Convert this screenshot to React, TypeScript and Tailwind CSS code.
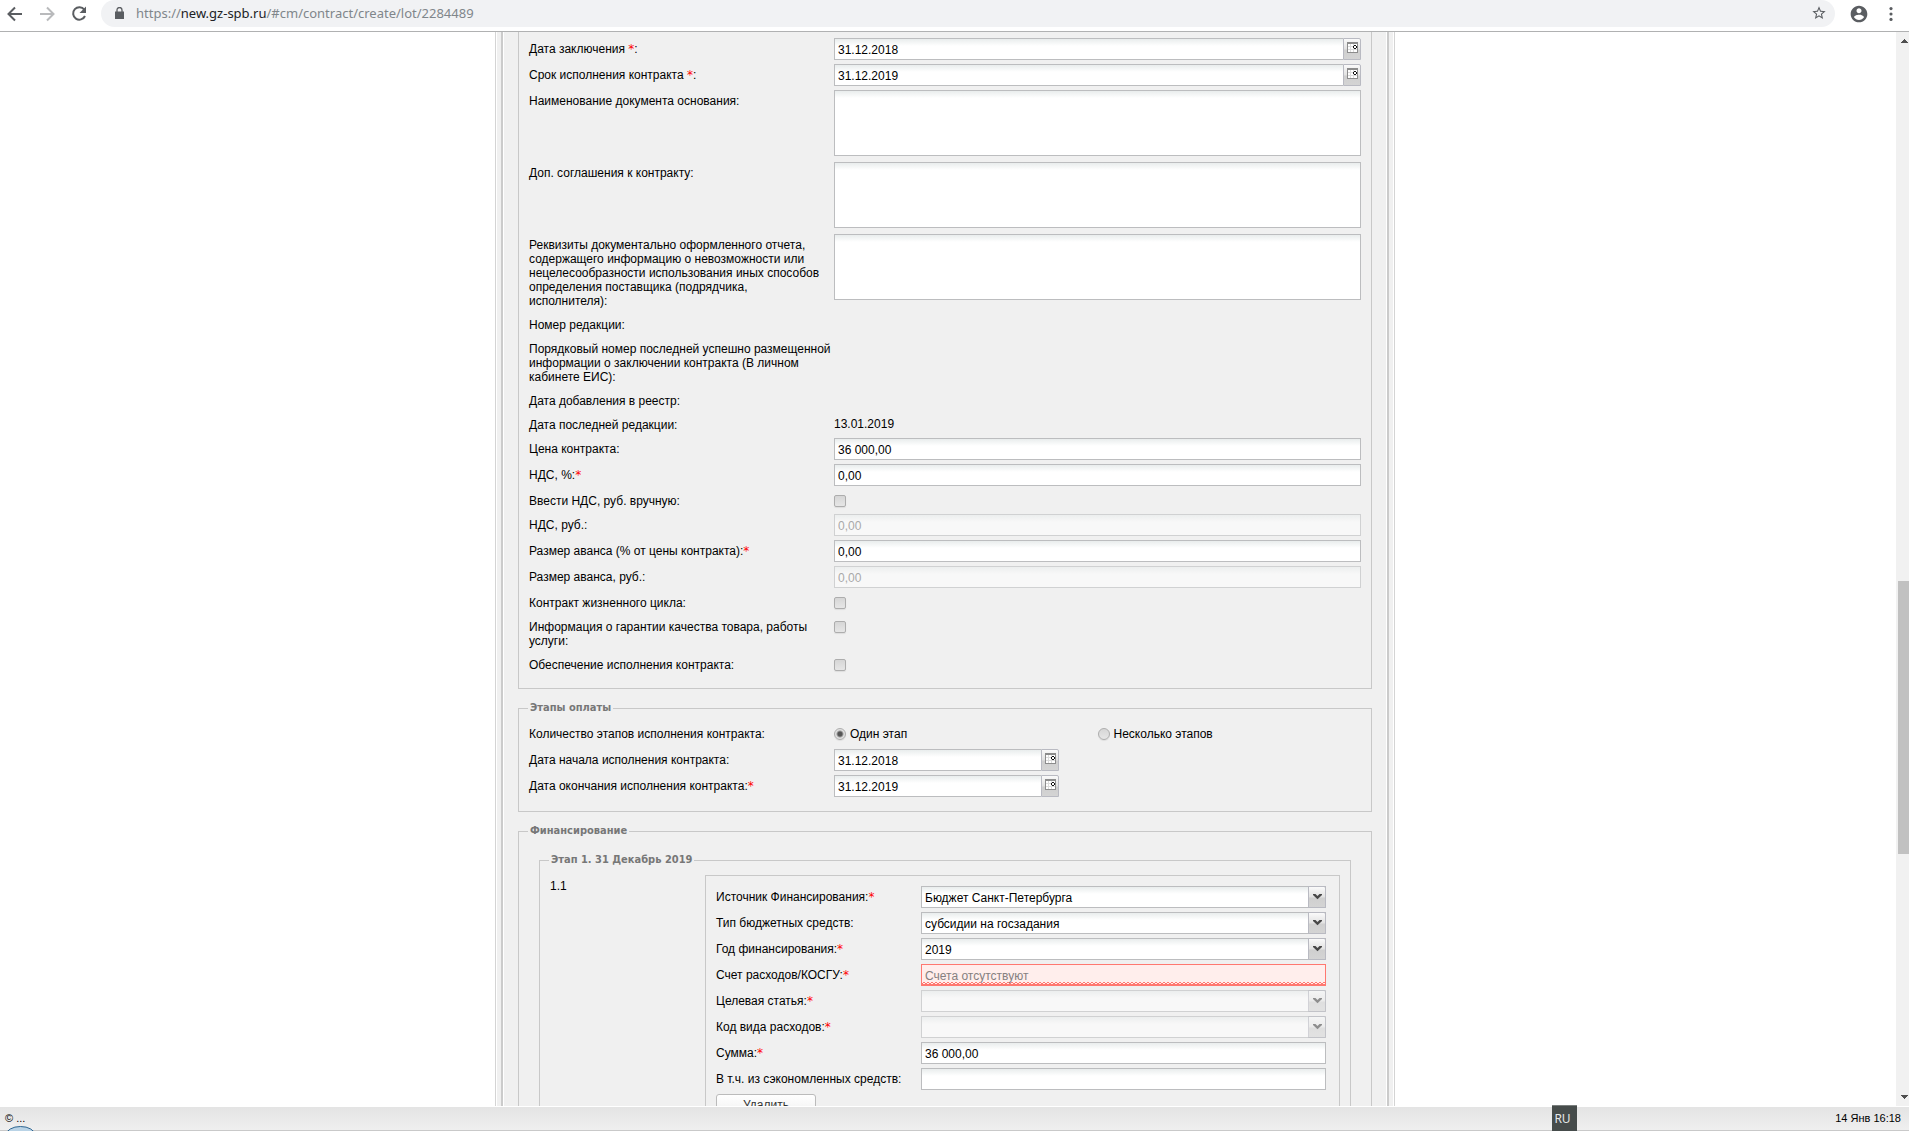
import { useId, type ReactNode } from "react";

const fieldBox =
  "block w-full rounded-none border border-[#bcbdbf] bg-white bg-[linear-gradient(#e9eded,#fff_7px)] px-[3px] pt-0.5 text-xs text-black outline-none disabled:border-[#d0d1d2] disabled:bg-[#f8f8f8] disabled:bg-[linear-gradient(#eceeee,#f8f8f8_7px)] disabled:text-[#a9a9a9] disabled:opacity-100";

const toggleBox =
  "block size-3 shrink-0 appearance-none border border-[#adadad] bg-[linear-gradient(#d6d6d6,#e6e6e6)] shadow-[0_1px_1px_rgba(0,0,0,0.08)]";

function Star() {
  return <span className="font-['DejaVu_Sans',sans-serif] text-xs leading-3 text-[#f00]">*</span>;
}

type RowProps = {
  label: string;
  id?: string;
  star?: "after" | "inside";
  narrow?: boolean;
  children?: ReactNode;
};

function Row({ label, id, star, narrow, children }: RowProps) {
  const column = narrow
    ? "w-[205px] shrink-0 pt-1 pb-0.5 leading-[14px]"
    : "w-[305px] shrink-0 pt-1 pb-0.5 leading-[14px] whitespace-pre-line";
  const content = (
    <>
      {label}
      {star === "inside" && (
        <>
          {" "}
          <Star />
        </>
      )}
      {star === "inside" && ":"}
      {star === "after" && <Star />}
    </>
  );
  return (
    <div className="mb-1 flex items-start">
      {id ? (
        <label htmlFor={id} className={column}>
          {content}
        </label>
      ) : (
        <span className={column}>{content}</span>
      )}
      <div className="min-w-0 flex-1">{children}</div>
    </div>
  );
}

type FieldProps = {
  label: string;
  value?: string;
  star?: "after" | "inside";
  narrow?: boolean;
  disabled?: boolean;
};

function TextRow({ label, value = "", star, narrow, disabled }: FieldProps) {
  const id = useId();
  return (
    <Row label={label} id={id} star={star} narrow={narrow}>
      <input id={id} type="text" defaultValue={value} disabled={disabled} className={`${fieldBox} h-[22px]`} />
    </Row>
  );
}

function AreaRow({ label }: { label: string }) {
  const id = useId();
  return (
    <Row label={label} id={id}>
      <textarea id={id} className={`${fieldBox} mb-0.5 h-[66px] resize-none`} />
    </Row>
  );
}

function CheckRow({ label }: { label: string }) {
  const id = useId();
  return (
    <Row label={label} id={id}>
      <input id={id} type="checkbox" className={`${toggleBox} mt-[5px] rounded-xs`} />
    </Row>
  );
}

function CalendarIcon() {
  return (
    <svg width="11" height="13" viewBox="0 0 11 13" shapeRendering="crispEdges" aria-hidden="true">
      <path d="M0 1h11v11H0z" fill="#8c8c8c" />
      <path d="M1 3h9v8H1z" fill="#fff" />
      <path d="M3 3h1v8H3zM6 3h1v8H6zM1 5h6v1H1zM1 8h9v1H1z" fill="#dcdcdc" />
      <path d="M7 4h2v1H7zM6 5h1v2H6zM9 5h1v2H9zM7 7h2v1H7z" fill="#111" />
      <path d="M7 5h2v2H7z" fill="#fff" />
    </svg>
  );
}

function DateRow({ label, value, star, short }: FieldProps & { short?: boolean }) {
  const id = useId();
  return (
    <Row label={label} id={id} star={star}>
      <div className={short ? "flex w-[225px]" : "flex w-full"}>
        <input id={id} type="text" defaultValue={value} className={`${fieldBox} h-[22px] min-w-0 flex-1 border-r-0`} />
        <button
          type="button"
          aria-label="Выбрать дату"
          className="flex h-[22px] w-[18px] justify-center rounded-tr-xs border border-[#b9bac2] bg-[linear-gradient(#fafafa,#e2e2e2_50%,#cfcfcf_55%,#d4d4d4)] pt-0.5"
        >
          <CalendarIcon />
        </button>
      </div>
    </Row>
  );
}

function SelectRow({ label, value = "", star, disabled }: FieldProps) {
  const id = useId();
  return (
    <Row label={label} id={id} star={star} narrow>
      <div className="relative">
        <select id={id} disabled={disabled} className={`${fieldBox} h-[22px] appearance-none`}>
          <option>{value}</option>
        </select>
        <span
          className={
            disabled
              ? "pointer-events-none absolute inset-y-0 right-0 flex w-[18px] justify-center rounded-tr-xs border border-[#b9bac2] bg-[linear-gradient(#fafafa,#e2e2e2_50%,#cfcfcf_55%,#d4d4d4)] pt-[7px] opacity-60"
              : "pointer-events-none absolute inset-y-0 right-0 flex w-[18px] justify-center rounded-tr-xs border border-[#b9bac2] bg-[linear-gradient(#fafafa,#e2e2e2_50%,#cfcfcf_55%,#d4d4d4)] pt-[7px]"
          }
        >
          <svg width="9" height="6" viewBox="0 0 9 6" aria-hidden="true">
            <path d="M0 0h2.500l2 2 2-2H9v1L4.500 5.300 0 1z" fill="#484848" />
          </svg>
        </span>
      </div>
    </Row>
  );
}

function ErrorRow({ label, placeholder }: { label: string; placeholder: string }) {
  const id = useId();
  const wave = useId();
  return (
    <Row label={label} id={id} star="after" narrow>
      <div className="relative">
        <input
          id={id}
          type="text"
          placeholder={placeholder}
          aria-invalid="true"
          className="block h-[22px] w-full rounded-none border border-[#ff7870] bg-[#ffeeec] px-[3px] pt-0.5 text-xs outline-none placeholder:text-[#858080]"
        />
        <svg className="pointer-events-none absolute bottom-px left-px h-[3px] w-[calc(100%-2px)]" shapeRendering="crispEdges" aria-hidden="true">
          <defs>
            <pattern id={wave} width="4" height="3" patternUnits="userSpaceOnUse">
              <path d="M1 0h2v1H1zM0 1h1v1H0zM3 1h1v1H3zM0 2h4v1H0z" fill="#ff7870" />
            </pattern>
          </defs>
          <rect width="100%" height="3" fill={`url(#${wave})`} />
        </svg>
      </div>
    </Row>
  );
}

function Legend({ children }: { children: ReactNode }) {
  return (
    <legend className="ml-[9px] px-0.5 font-['DejaVu_Sans_Condensed','DejaVu_Sans',sans-serif] text-[11px] leading-[14px] font-bold text-[#777]">
      {children}
    </legend>
  );
}

function BrowserBar() {
  return (
    <header className="flex h-8 shrink-0 items-start border-b border-[#b0b1b2] bg-white pr-2 pl-1.5 text-[#5a5d61]">
      <div className="flex h-[27px] items-center gap-3.5">
        <button type="button" aria-label="Назад" className="block">
          <svg width="18" height="18" viewBox="0 0 18 18" fill="none" stroke="currentColor" strokeWidth="2" aria-hidden="true">
            <path d="M16 9H3M9 2.500 2.500 9 9 15.500" />
          </svg>
        </button>
        <button type="button" aria-label="Вперёд" className="block text-[#b9babc]">
          <svg width="18" height="18" viewBox="0 0 18 18" fill="none" stroke="currentColor" strokeWidth="2" aria-hidden="true">
            <path d="M2 9h13M9 2.500 15.500 9 9 15.500" />
          </svg>
        </button>
        <button type="button" aria-label="Обновить" className="block">
          <svg width="18" height="18" viewBox="0 0 18 18" fill="none" aria-hidden="true">
            <path d="M14.300 4.700A6.200 6.200 0 1 0 15 11" stroke="currentColor" strokeWidth="2" />
            <path d="M16 1.500V8H9.500z" fill="currentColor" />
          </svg>
        </button>
      </div>
      <div className="ml-[13px] flex h-[27px] flex-1 items-center rounded-r-full rounded-bl-full rounded-tl-full bg-[#f1f2f4] pr-2 pb-0.5 pl-3.5">
        <svg width="9" height="12" viewBox="0 0 9 12" aria-hidden="true">
          <path d="M0 4.500h9V12H0z" fill="currentColor" />
          <path d="M2 5V3a2.500 2.500 0 0 1 5 0v2" fill="none" stroke="currentColor" strokeWidth="1.300" />
        </svg>
        <p className="ml-3 flex-1 font-['Noto_Sans',sans-serif] text-[13px] leading-5 text-[#80868b]">
          https://<span className="text-[#202124]">new.gz-spb.ru</span>/#cm/contract/create/lot/2284489
        </p>
        <button type="button" aria-label="Добавить в закладки" className="block">
          <svg width="16" height="16" viewBox="0 0 24 24" fill="currentColor" aria-hidden="true">
            <path d="M22 9.240l-7.190-.62L12 2 9.190 8.630 2 9.240l5.460 4.730L5.820 21 12 17.270 18.180 21l-1.630-7.030L22 9.240zM12 15.400l-3.760 2.270 1-4.280-3.320-2.880 4.380-.38L12 6.100l1.710 4.040 4.380.38-3.320 2.880 1 4.280L12 15.400z" />
          </svg>
        </button>
      </div>
      <div className="flex h-[27px] items-center">
        <button type="button" aria-label="Профиль" className="ml-3.5 block">
          <svg width="20" height="20" viewBox="0 0 24 24" fill="currentColor" aria-hidden="true">
            <path d="M12 2C6.480 2 2 6.480 2 12s4.480 10 10 10 10-4.480 10-10S17.520 2 12 2zm0 3c1.660 0 3 1.340 3 3s-1.340 3-3 3-3-1.340-3-3 1.340-3 3-3zm0 14.200c-2.500 0-4.710-1.280-6-3.220.03-1.990 4-3.080 6-3.080 1.990 0 5.970 1.090 6 3.080-1.290 1.940-3.500 3.220-6 3.220z" />
          </svg>
        </button>
        <button type="button" aria-label="Меню" className="ml-3 block">
          <svg width="20" height="20" viewBox="0 0 24 24" fill="currentColor" aria-hidden="true">
            <circle cx="12" cy="5.500" r="1.900" />
            <circle cx="12" cy="12" r="1.900" />
            <circle cx="12" cy="18.500" r="1.900" />
          </svg>
        </button>
      </div>
    </header>
  );
}

function Scrollbar() {
  return (
    <div className="flex w-[13px] shrink-0 flex-col bg-[#f1f1f1] pl-0.5" aria-hidden="true">
      <svg className="ml-[3px] h-[17px] w-2" viewBox="0 0 8 17" shapeRendering="crispEdges">
        <path d="M0 11h7v-1H6V9H5V8H4V7H3v1H2v1H1v1H0z" fill="#4f4f4f" />
      </svg>
      <div className="grow-[532]" />
      <div className="grow-[273] bg-[#c1c1c1]" />
      <div className="grow-[235]" />
      <svg className="ml-[3px] h-[17px] w-2" viewBox="0 0 8 17" shapeRendering="crispEdges">
        <path d="M0 6h7v1H6v1H5v1H4v1H3V9H2V8H1V7H0z" fill="#4f4f4f" />
      </svg>
    </div>
  );
}

function ContractForm() {
  return (
    <form className="bg-[#f0f0f0] px-3.5">
      <section className="border-x border-b border-[#c8c8c8] px-2.5 pt-1.5 pb-2.5">
        <DateRow label="Дата заключения" star="inside" value="31.12.2018" />
        <DateRow label="Срок исполнения контракта" star="inside" value="31.12.2019" />
        <AreaRow label="Наименование документа основания:" />
        <AreaRow label="Доп. соглашения к контракту:" />
        <AreaRow
          label={
            "Реквизиты документально оформленного отчета, содержащего информацию о невозможности или нецелесообразности использования иных способов определения поставщика (подрядчика,\nисполнителя):"
          }
        />
        <Row label="Номер редакции:" />
        <Row label="Порядковый номер последней успешно размещенной информации о заключении контракта (В личном кабинете ЕИС):" />
        <Row label="Дата добавления в реестр:" />
        <Row label="Дата последней редакции:">
          <p className="pt-[3px] leading-[14px]">13.01.2019</p>
        </Row>
        <TextRow label="Цена контракта:" value="36 000,00" />
        <TextRow label="НДС, %:" star="after" value="0,00" />
        <CheckRow label="Ввести НДС, руб. вручную:" />
        <TextRow label="НДС, руб.:" value="0,00" disabled />
        <TextRow label="Размер аванса (% от цены контракта):" star="after" value="0,00" />
        <TextRow label="Размер аванса, руб.:" value="0,00" disabled />
        <CheckRow label="Контракт жизненного цикла:" />
        <CheckRow label="Информация о гарантии качества товара, работы услуги:" />
        <CheckRow label="Обеспечение исполнения контракта:" />
      </section>

      <fieldset className="mt-3 border border-[#c8c8c8]">
        <Legend>Этапы оплаты</Legend>
        <div className="px-2.5 pt-2 pb-2.5">
          <Row label="Количество этапов исполнения контракта:">
            <div className="grid h-[22px] grid-cols-2 items-center">
              <label className="flex items-center gap-1">
                <input type="radio" name="stages" defaultChecked className={`${toggleBox} rounded-full bg-[radial-gradient(#555_2px,#e0e0e0_4px)]!`} />
                Один этап
              </label>
              <label className="flex items-center gap-1">
                <input type="radio" name="stages" className={`${toggleBox} rounded-full`} />
                Несколько этапов
              </label>
            </div>
          </Row>
          <DateRow label="Дата начала исполнения контракта:" value="31.12.2018" short />
          <DateRow label="Дата окончания исполнения контракта:" star="after" value="31.12.2019" short />
        </div>
      </fieldset>

      <fieldset className="mt-3 border border-[#c8c8c8]">
        <Legend>Финансирование</Legend>
        <div className="px-5 pt-[15px] pb-5">
          <fieldset className="border border-[#c8c8c8]">
            <Legend>Этап 1. 31 Декабрь 2019</Legend>
            <div className="flex px-2.5 pt-2 pb-2.5">
              <p className="w-[155px] shrink-0 pt-1 leading-[14px]">1.1</p>
              <section className="min-w-0 flex-1 border border-[#c8c8c8] py-2.5 pr-[13px] pl-2.5">
                <SelectRow label="Источник Финансирования:" star="after" value="Бюджет Санкт-Петербурга" />
                <SelectRow label="Тип бюджетных средств:" value="субсидии на госзадания" />
                <SelectRow label="Год финансирования:" star="after" value="2019" />
                <ErrorRow label="Счет расходов/КОСГУ:" placeholder="Счета отсутствуют" />
                <SelectRow label="Целевая статья:" star="after" disabled />
                <SelectRow label="Код вида расходов:" star="after" disabled />
                <TextRow label="Сумма:" star="after" value="36 000,00" narrow />
                <TextRow label="В т.ч. из сэкономленных средств:" narrow />
                <button
                  type="button"
                  className="block h-[22px] w-[100px] rounded-[3px] border border-[#bbb] bg-[linear-gradient(#fff,#f0f0f0)] text-xs text-[#333]"
                >
                  Удалить
                </button>
              </section>
            </div>
          </fieldset>
        </div>
      </fieldset>
    </form>
  );
}

function StatusBar() {
  return (
    <footer className="relative flex h-6 shrink-0 items-start justify-between border-b border-[#c9c9c9] bg-[linear-gradient(#e4e4e4,#efefef)] pr-2 pl-[5px] text-[11px] leading-[22px] text-black">
      <span>© ...</span>
      <svg className="absolute bottom-[-1px] left-[7px]" width="27" height="5" viewBox="0 0 27 5" aria-hidden="true">
        <ellipse cx="13.500" cy="9" rx="14.500" ry="8.500" fill="#b9d3e6" stroke="#2d6591" />
      </svg>
      <button
        type="button"
        className="absolute -top-0.5 right-[332px] h-[26px] w-[25px] border-t border-[#7a7f7e] bg-[#464c4b] pr-1 text-center font-['Noto_Sans',sans-serif] text-xs text-[#e4e8e8]"
      >
        RU
      </button>
      <time>14 Янв 16:18</time>
    </footer>
  );
}

export default function App() {
  return (
    <div className="flex h-screen flex-col overflow-hidden bg-white font-['Liberation_Sans',Arial,sans-serif] text-xs text-black">
      <BrowserBar />
      <div className="mb-px flex min-h-0 flex-1">
        <main className="min-w-0 flex-1 overflow-hidden pr-1.5">
          <div className="mx-auto w-full max-w-[900px] border-x border-[#d4d4d4]">
            <div className="border-x border-white bg-[#f0f0f0] px-1">
              <div className="border-x-2 border-[#cbcbcb]">
                <div className="border-x border-white">
                  <ContractForm />
                </div>
              </div>
            </div>
          </div>
        </main>
        <Scrollbar />
      </div>
      <StatusBar />
    </div>
  );
}
